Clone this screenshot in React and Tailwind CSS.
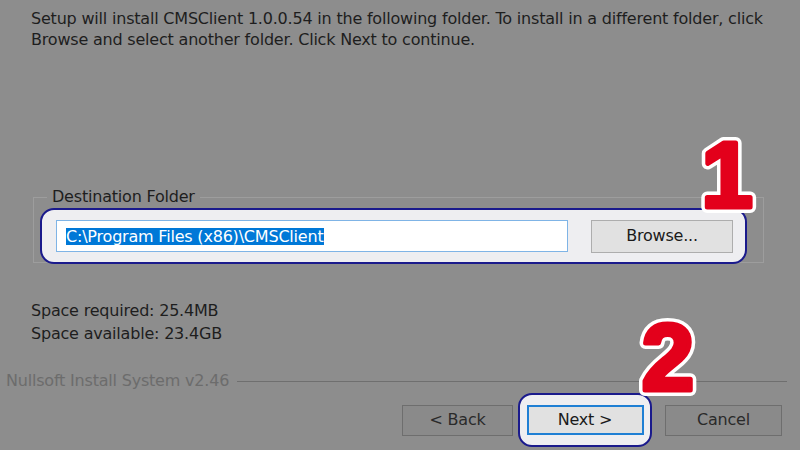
import React from "react";

function BigNum({ children, w, h, size }) {
  const common = {
    x: w / 2,
    y: h - 8,
    textAnchor: "middle",
    fontFamily: "'Liberation Sans', Arial, sans-serif",
    fontWeight: "700",
    fontSize: size,
    strokeLinejoin: "round",
  };
  return (
    <svg width={w} height={h} viewBox={`0 0 ${w} ${h}`} overflow="visible">
      <text {...common} fill="#ffffff" stroke="#ffffff" strokeWidth="12">
        {children}
      </text>
      <text {...common} fill="#e3001b" stroke="#e3001b" strokeWidth="5">
        {children}
      </text>
    </svg>
  );
}

export default function App() {
  return (
    <div
      className="relative w-[800px] h-[450px] overflow-hidden bg-[#8d8d8d] text-[#1e1e1e] text-[16px]"
      style={{ fontFamily: "'DejaVu Sans', Verdana, sans-serif" }}
    >
      <p className="pl-[31px] pt-[8px] leading-[21px] tracking-[-0.2px]">
        Setup will install CMSClient 1.0.0.54 in the following folder. To install in a different folder, click
        <br />
        Browse and select another folder. Click Next to continue.
      </p>

      <fieldset className="ml-[33px] mt-[138px] w-[731px] h-[75px] border border-[#9d9d9d] pl-[6px] pr-[16px]">
        <legend className="ml-[7px] px-[5px] leading-[18px] tracking-[-0.2px] text-[#1e1e1e]">
          Destination Folder
        </legend>
        <div className="flex items-center h-[56px] mt-[2px] rounded-[14px] border-2 border-[#1a1a8c] bg-[#eeeef1] pl-[14px]">
          <div className="flex items-center w-[512px] h-[32px] bg-white border border-[#7fb4e6] pl-[9px]">
            <span className="bg-[#0078d7] text-white leading-[17px] tracking-[-0.2px]">
              C:\Program Files (x86)\CMSClient
            </span>
          </div>
          <div className="ml-[23px] flex items-center justify-center w-[142px] h-[33px] bg-[#e1e1e1] border border-[#adadad] tracking-[-0.2px] text-[#1a1a1a]">
            Browse...
          </div>
        </div>
      </fieldset>

      <div className="pl-[31px] mt-[36px] leading-[23px] tracking-[-0.2px]">
        <div>Space required: 25.4MB</div>
        <div>Space available: 23.4GB</div>
      </div>

      <div className="flex items-center pl-[6px] pr-[13px] mt-[26px]">
        <span className="text-[#6c6c6c] tracking-[-0.2px] leading-[20px]">Nullsoft Install System v2.46</span>
        <div className="flex-1 ml-[8px] h-px bg-[#6f6f6f]" />
      </div>

      <div className="flex items-center pl-[402px] mt-[2px]">
        <div className="flex items-center justify-center w-[111px] h-[31px] bg-[#8a8a8a] border border-[#6e6e6e] tracking-[-0.2px] text-[#2a2a2a]">
          &lt; Back
        </div>
        <div className="ml-[5px] flex items-center justify-center w-[134px] h-[54px] rounded-[14px] border-2 border-[#1a1a8c] bg-[#eeeef1]">
          <div className="flex items-center justify-center w-[117px] h-[30px] bg-[#e1e1e1] border-2 border-[#1f7fd4] tracking-[-0.2px] text-[#1a1a1a]">
            Next &gt;
          </div>
        </div>
        <div className="ml-[13px] flex items-center justify-center w-[117px] h-[31px] bg-[#8a8a8a] border border-[#6e6e6e] tracking-[-0.2px] text-[#2a2a2a]">
          Cancel
        </div>
      </div>

      <div className="absolute left-[689px] top-[125px]">
        <BigNum w={76} h={90} size={92}>1</BigNum>
      </div>
      <div className="absolute left-[628px] top-[308px]">
        <BigNum w={80} h={90} size={94}>2</BigNum>
      </div>
    </div>
  );
}
